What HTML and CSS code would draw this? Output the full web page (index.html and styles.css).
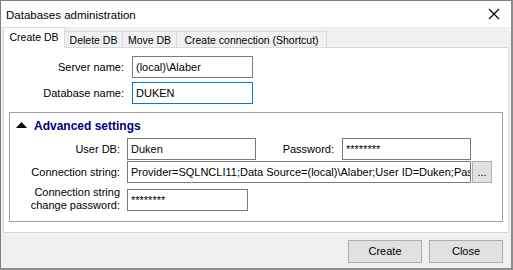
FILE: index.html
```html
<!DOCTYPE html>
<html>
<head>
<meta charset="utf-8">
<link rel="stylesheet" href="styles.css">
</head>
<body>
<div class="window">
  <div class="titlebar">
    <span class="title">Databases administration</span>
    <svg class="close" width="12" height="12" viewBox="0 0 12 12"><path d="M1 1 L11 11 M11 1 L1 11" stroke="#000" stroke-width="1.1" fill="none"/></svg>
  </div>
  <div class="content">
    <div class="tabs">
      <div class="tab active t-create">Create DB</div>
      <div class="tab t-delete">Delete DB</div>
      <div class="tab t-move">Move DB</div>
      <div class="tab t-conn">Create connection (Shortcut)</div>
    </div>
    <div class="panel">
      <div class="form">
        <label class="lbl">Server name:</label>
        <div class="input">(local)\Alaber</div>
        <label class="lbl">Database name:</label>
        <div class="input focus">DUKEN</div>
      </div>
      <div class="group">
        <div class="group-head">
          <svg class="tri" width="11" height="6" viewBox="0 0 11 6"><path d="M5.5 0 L11 6 L0 6 Z" fill="#000"/></svg>
          <span>Advanced settings</span>
        </div>
        <div class="grid">
          <label class="lbl">User DB:</label>
          <div class="input">Duken</div>
          <label class="lbl">Password:</label>
          <div class="input pw">********</div>
          <span></span>
          <label class="lbl">Connection string:</label>
          <div class="input wide"><span class="clip">Provider=SQLNCLI11;Data Source=(local)\Alaber;User ID=Duken;Pass</span></div>
          <div class="dots">...</div>
          <label class="lbl two">Connection string<br>change password:</label>
          <div class="input pw short">********</div>
        </div>
      </div>
    </div>
    <div class="footer">
      <div class="btn">Create</div>
      <div class="btn">Close</div>
    </div>
  </div>
</div>
</body>
</html>
```

FILE: styles.css
```css
html, body {
  margin: 0;
  padding: 0;
  background: #fff;
}
body {
  font-family: "Liberation Sans", Arial, sans-serif;
  font-size: 11px;
  color: #000;
}
.window {
  width: 513px;
  height: 270px;
  box-sizing: border-box;
  border: 1px solid #7f7f7f;
  border-right: 2px solid #8c8c8c;
  border-bottom: 2px solid #8c8c8c;
  background: #f0f0f0;
  display: flex;
  flex-direction: column;
}
.titlebar {
  height: 26px;
  background: #fff;
  display: flex;
  align-items: center;
  justify-content: space-between;
  padding: 0 11px 0 5px;
  flex: 0 0 auto;
}
.title {
  font-size: 11.5px;
  padding-top: 1px;
}
.close {
  display: block;
}
.content {
  flex: 1 1 auto;
  display: flex;
  flex-direction: column;
  padding: 0 2px 0 2px;
}
.tabs {
  display: flex;
  align-items: flex-end;
  height: 20px;
  flex: 0 0 auto;
}
.tab {
  height: 16px;
  line-height: 16px;
  box-sizing: border-box;
  border: 1px solid #d9d9d9;
  border-bottom: none;
  border-left: none;
  background: #f0f0f0;
  white-space: nowrap;
  text-align: center;
  font-size: 10.5px;
}
.tab.active {
  height: 21px;
  line-height: 18px;
  background: #fff;
  border-left: 1px solid #d9d9d9;
  margin-bottom: -1px;
  position: relative;
  z-index: 1;
}
.t-create { width: 62px; }
.t-delete { width: 58px; }
.t-move { width: 54px; }
.t-conn { width: 150px; }
.panel {
  height: 186px;
  box-sizing: border-box;
  background: #fff;
  border: 1px solid #d9d9d9;
  padding: 8px 0 0 0;
  flex: 0 0 auto;
}
.form {
  display: grid;
  grid-template-columns: 120px 121px;
  grid-auto-rows: 22px;
  column-gap: 8px;
  row-gap: 4px;
}
.lbl {
  display: flex;
  align-items: center;
  justify-content: flex-end;
  text-align: right;
  white-space: nowrap;
}
.input {
  box-sizing: border-box;
  height: 22px;
  border: 1px solid #7a7a7a;
  background: #fff;
  padding: 0 3px;
  line-height: 20px;
  white-space: nowrap;
  overflow: hidden;
}
.input.focus {
  border-color: #0078d7;
}
.group {
  margin: 8px 0 0 5px;
  width: 494px;
  height: 110px;
  box-sizing: border-box;
  border: 1px solid #a0a0a0;
}
.group-head {
  height: 25px;
  display: flex;
  align-items: center;
  padding-left: 6px;
  gap: 7px;
  color: #00007f;
  font-weight: bold;
  font-size: 12px;
}
.tri {
  display: block;
  margin-top: -1px;
}
.grid {
  display: grid;
  grid-template-columns: 117px 129px 86px 129px 21px;
  grid-template-rows: 22px 22px auto;
  row-gap: 1px;
}
.grid .lbl {
  padding-right: 7px;
}
.grid .lbl:nth-of-type(2) {
  padding-right: 8px;
}
.input.wide {
  grid-column: 2 / 5;
  padding-right: 0;
}
.clip {
  display: block;
  overflow: hidden;
  white-space: nowrap;
}
.dots {
  margin-left: 1px;
  box-sizing: border-box;
  height: 22px;
  border: 1px solid #adadad;
  background: #e1e1e1;
  text-align: center;
  line-height: 20px;
}
.lbl.two {
  line-height: 13px;
  margin-top: 1px;
  height: 28px;
  align-self: start;
}
.input.short {
  width: 121px;
  align-self: center;
  margin-top: 2px;
}
.footer {
  flex: 1 1 auto;
  display: flex;
  justify-content: flex-end;
  align-items: flex-start;
  gap: 7px;
  padding: 7px 6px 0 0;
}
.btn {
  width: 74px;
  height: 23px;
  box-sizing: border-box;
  border: 1px solid #adadad;
  background: #e1e1e1;
  text-align: center;
  line-height: 21px;
}
```
